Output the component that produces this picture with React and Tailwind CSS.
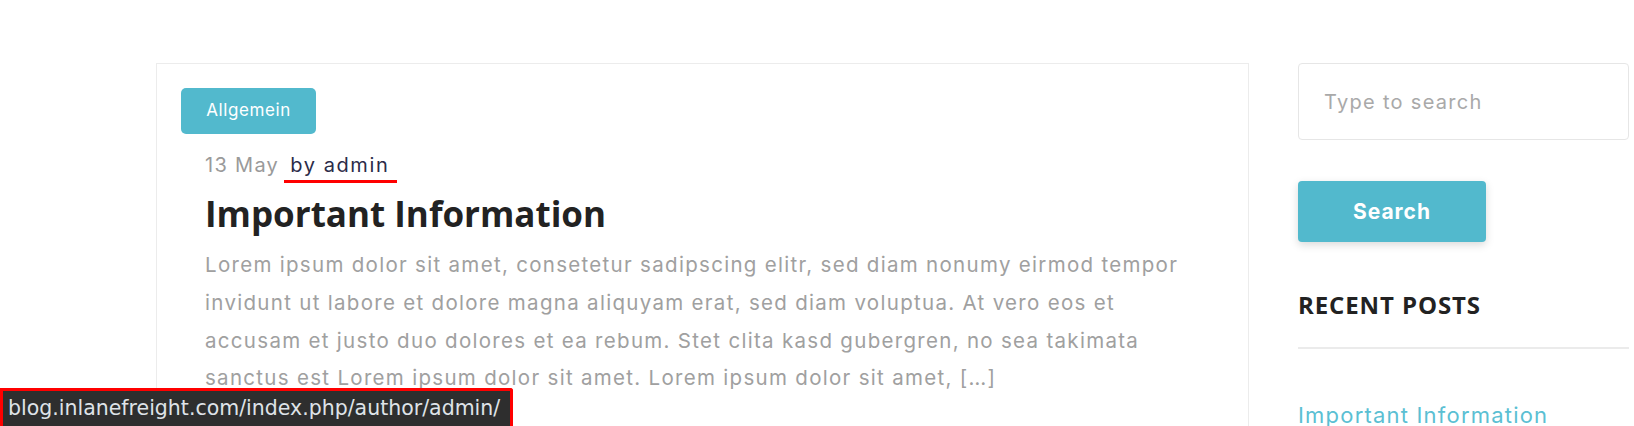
import React from 'react';

const body = { fontFamily: 'Inter, "Open Sans", sans-serif' };
const heading = { fontFamily: '"Open Sans", Lato, sans-serif' };

function PostCard() {
    return (
        <div className="flex-1 border border-[#ececec] bg-white pt-[24px] px-[24px] pb-10">
            <span className="inline-flex items-center justify-center w-[135px] h-[46px] rounded-[5px] bg-[#52b9cd] text-white text-[17px] tracking-[0.6px]">
                Allgemein
            </span>
            <div className="pl-[24px] pr-[40px]">
                {/* Meta */}
                <div className="mt-[16px] flex items-center gap-[11px] text-[20px] leading-[30px] tracking-[1.3px]">
                    <span className="text-[#9a9a9a]">13 May</span>
                    <span className="relative text-[#2b2b48] tracking-[1.6px]">
                        by admin
                        <span className="absolute -left-[6px] -right-[8px] top-[30px] h-[3px] bg-[#ff0000]" />
                    </span>
                </div>
                <h2 style={heading} className="mt-[12px] text-[35px] leading-[44px] font-bold text-[#222]">
                    Important Information
                </h2>
                <p className="mt-[10px] text-[20.5px] leading-[37.8px] tracking-[1.3px] text-[#a0a0a0]">
                    Lorem ipsum dolor sit amet, consetetur sadipscing elitr, sed diam nonumy eirmod tempor invidunt ut labore et dolore magna aliquyam erat, sed diam voluptua. At vero eos et accusam et justo duo dolores et ea rebum. Stet clita kasd gubergren, no sea takimata sanctus est Lorem ipsum dolor sit amet. Lorem ipsum dolor sit amet, [&hellip;]
                </p>
            </div>
        </div>
    );
}

function Sidebar() {
    return (
        <div className="w-[331px] shrink-0">
            <input
                type="text"
                placeholder="Type to search"
                className="w-full h-[77px] border border-[#e6e6e6] rounded-[4px] pl-[25px] text-[20px] tracking-[1.3px] placeholder:text-[#a9a9a9] outline-none"
            />
            <button className="mt-[41px] w-[188px] h-[61px] rounded-[4px] bg-[#52b9cd] text-white text-[21px] tracking-[1px] font-bold shadow-[0_3px_8px_rgba(0,0,0,0.15)]">
                Search
            </button>
            <h3 style={heading} className="mt-[48px] text-[24px] leading-[30px] tracking-[0.9px] font-bold text-[#222] uppercase">
                Recent Posts
            </h3>
            <div className="mt-[27px] h-[2px] bg-[#ebebeb]" />
            <a href="#" className="block mt-[50px] text-[22px] tracking-[1.2px] text-[#5bbfd3]">
                Important Information
            </a>
        </div>
    );
}

export default function App() {
    return (
        <div style={body} className="relative w-[1634px] h-[426px] overflow-hidden bg-white">
            <div className="flex gap-[49px] pt-[63px] pl-[156px] pr-[5px]">
                <PostCard />
                <Sidebar />
            </div>

            {/* Browser status bar */}
            <div className="absolute left-0 bottom-0 w-[513px] h-[38px] border-[3px] border-b-0 border-[#ff0000] rounded-tr-[3px] bg-[#2e2e2e] pl-[5px] text-[#dfe3e8] text-[20.5px] leading-[34px] whitespace-nowrap" style={{ fontFamily: '"DejaVu Sans", sans-serif' }}>
                blog.inlanefreight.com/index.php/author/admin/
            </div>
        </div>
    );
}
